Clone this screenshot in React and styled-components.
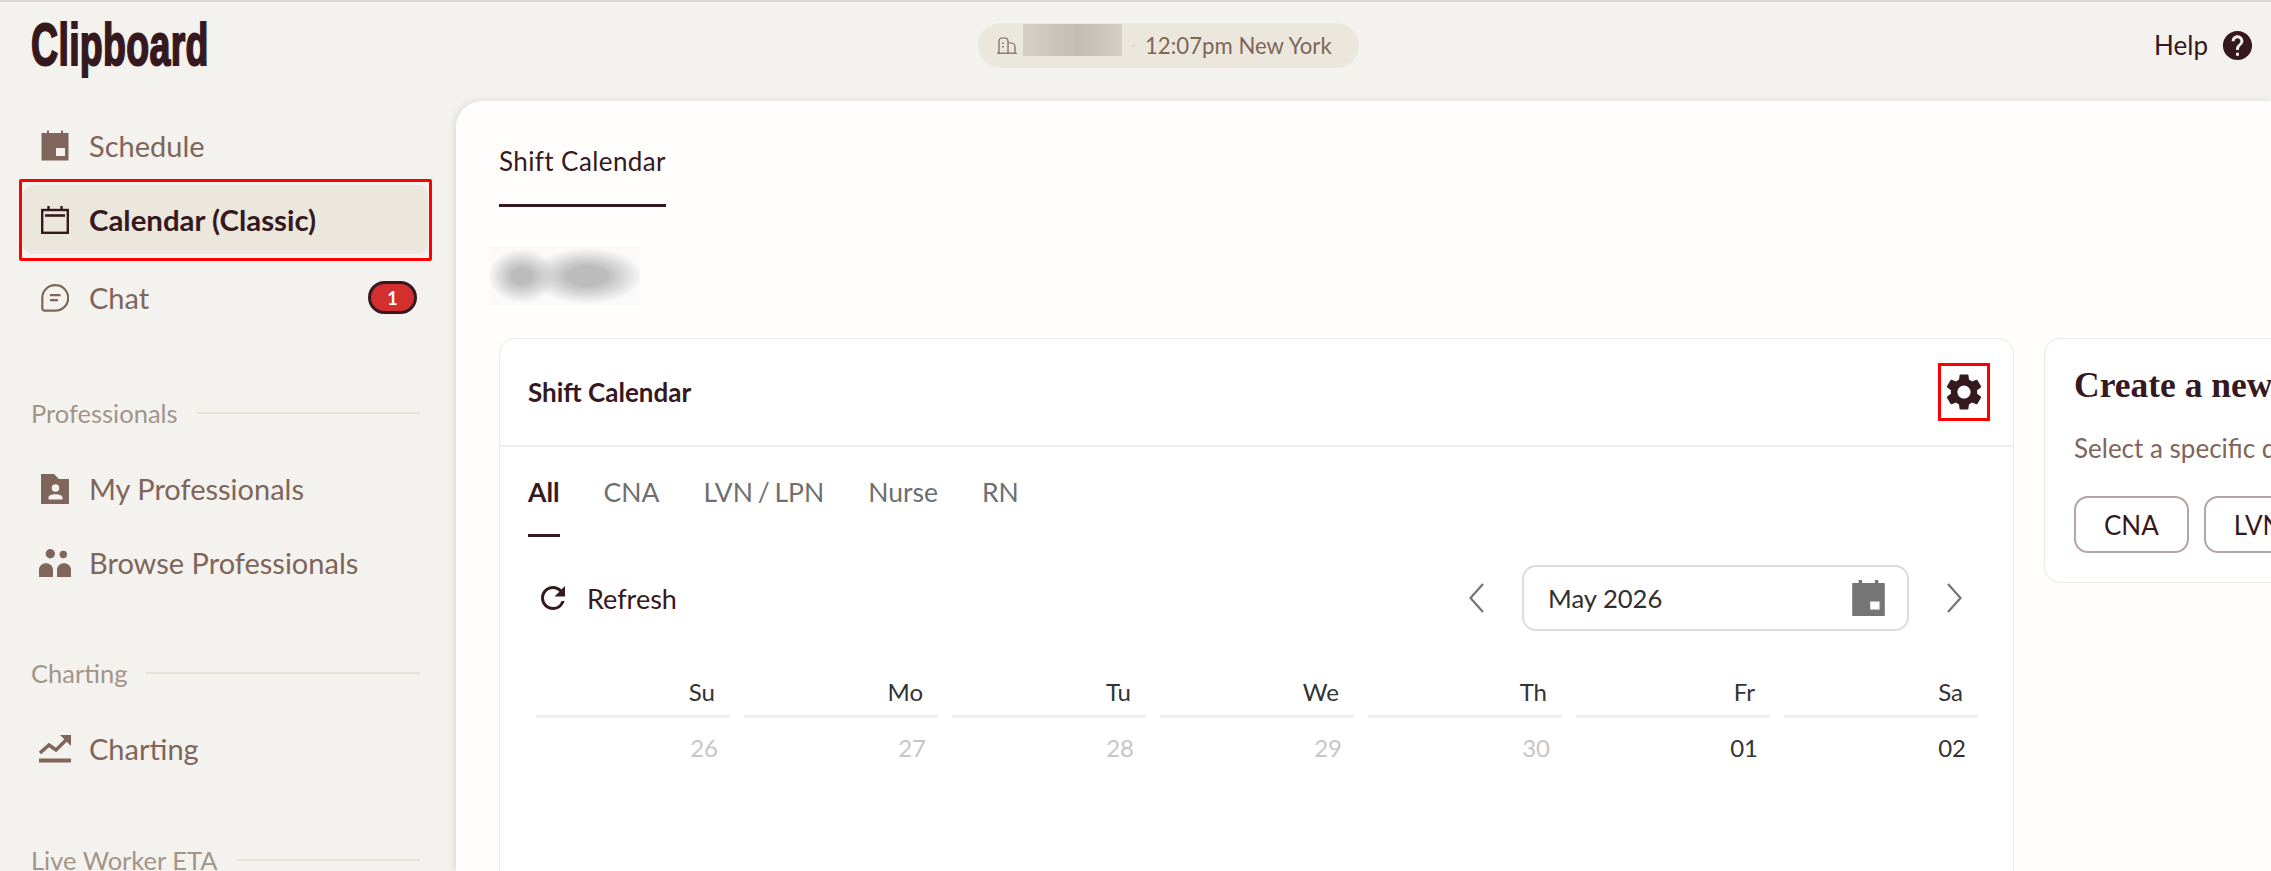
import React from 'react';
import styled, { createGlobalStyle } from 'styled-components';
import { MdSettings, MdRefresh, MdHelp } from 'react-icons/md';

const GlobalStyle = createGlobalStyle`
  html, body {
    margin: 0;
    padding: 0;
    height: 100%;
    overflow: hidden;
    background: #f3f2ee;
  }
  * {
    box-sizing: border-box;
  }
`;

const Page = styled.div`
  width: 2271px;
  height: 871px;
  overflow: hidden;
  background: #f3f2ee;
  font-family: Lato, "Liberation Sans", sans-serif;
  color: #36191e;
`;

const TopBar = styled.header`
  height: 101px;
  border-top: 2px solid #d9d9d6;
  padding: 0 16px 13px 31px;
  display: grid;
  grid-template-columns: 947px auto 1fr;
  align-items: center;
`;

const Logo = styled.div`
  font-family: "Liberation Sans", sans-serif;
  font-weight: 700;
  font-size: 60px;
  line-height: 60px;
  letter-spacing: 0.5px;
  color: #36191e;
  -webkit-text-stroke: 2px #36191e;
  transform: scaleX(0.625);
  transform-origin: left center;
  white-space: nowrap;
`;

const LocationPill = styled.div`
  height: 45px;
  width: 381px;
  border-radius: 23px;
  background: #ebe7dc;
  display: flex;
  align-items: center;
  padding-left: 19px;
  font-size: 22.2px;
  color: #7f655a;
`;

const BlurredName = styled.div`
  width: 99px;
  height: 32px;
  margin: -11px 0 0 6px;
  background: linear-gradient(90deg, #d6d0c6, #c3bcb2 55%, #d4cec4);
`;

const Dot = styled.span`
  width: 3px;
  height: 3px;
  border-radius: 50%;
  background: #dcd8cc;
  margin: 0 10px 0 10px;
`;

const HelpLink = styled.div`
  justify-self: end;
  display: flex;
  align-items: center;
  gap: 12px;
  font-size: 26px;
  color: #36191e;
`;

const Body = styled.div`
  display: flex;
  height: 770px;
`;

const Sidebar = styled.nav`
  width: 456px;
  flex-shrink: 0;
  padding: 10px 28px 0 23px;
`;

const NavRow = styled.div`
  position: relative;
  height: 69px;
  display: flex;
  align-items: center;
  gap: 18px;
  padding: 0 11px 0 16px;
  border-radius: 10px;
  font-size: ${(p) => (p.$active ? '29.4px' : '29px')};
  color: ${(p) => (p.$active ? '#36191e' : '#7f655a')};
  font-weight: ${(p) => (p.$active ? 700 : 400)};
  background: ${(p) => (p.$active ? '#ebe7dc' : 'transparent')};
  margin-top: ${(p) => (p.$active ? '5px' : p.$flush ? '5px' : '0')};
  margin-bottom: ${(p) => (p.$active ? '9px' : '0')};

  ${(p) =>
    p.$active &&
    `&::after {
      content: '';
      position: absolute;
      inset: -6px -4px -7px -4px;
      border: 3px solid #ff0000;
      border-radius: 2px;
    }`}
`;

const NavIcon = styled.span`
  width: 32px;
  height: 32px;
  flex-shrink: 0;
  display: flex;
  align-items: center;
  justify-content: center;
`;

const NavBadge = styled.span`
  margin-left: auto;
  width: 49px;
  height: 33px;
  border-radius: 17px;
  background: #d32f2f;
  border: 3px solid #36191e;
  color: #ffffff;
  font-size: 18px;
  font-weight: 700;
  display: flex;
  align-items: center;
  justify-content: center;
`;

const SectionLabel = styled.div`
  display: flex;
  align-items: center;
  gap: 19px;
  height: 30px;
  margin: ${(p) => p.$top}px 8px 26px;
  font-size: 25.5px;
  color: #a3948a;
  white-space: nowrap;

  &::after {
    content: '';
    flex: 1;
    height: 2px;
    background: #e6e2d8;
  }
`;

const Main = styled.main`
  flex: 1;
  min-width: 0;
  overflow: hidden;
  background: #fffefc;
  border-top-left-radius: 26px;
  box-shadow: -2px 0 6px rgba(80, 60, 40, 0.12);
  padding: 41px 0 0 43px;
`;

const PageTab = styled.div`
  display: inline-block;
  height: 65px;
  line-height: 38px;
  border-bottom: 3px solid #36191e;
  font-size: 26px;
  letter-spacing: 0.4px;
  color: #36191e;
`;

const BlurredTitle = styled.div`
  width: 151px;
  height: 59px;
  margin: 40px 0 32px -10px;
  background:
    radial-gradient(ellipse 34px 27px at 33px 29px, #bcbcbc 30%, rgba(188, 188, 188, 0) 100%),
    radial-gradient(ellipse 56px 28px at 98px 29px, #bcbcbc 35%, rgba(188, 188, 188, 0) 100%),
    #fafafa;
`;

const Columns = styled.div`
  display: flex;
  gap: 30px;
  width: 2200px;
`;

const Card = styled.section`
  width: 1515px;
  height: 600px;
  flex-shrink: 0;
  background: #ffffff;
  border: 1px solid #e8e8e6;
  border-radius: 16px;
`;

const CardHeader = styled.div`
  height: 108px;
  display: flex;
  align-items: center;
  justify-content: space-between;
  padding: 0 23px 0 28px;
  border-bottom: 2px solid #eeeeec;
`;

const CardTitle = styled.h2`
  margin: 0;
  font-size: 26px;
  font-weight: 700;
  color: #36191e;
`;

const GearBox = styled.div`
  width: 52px;
  height: 58px;
  border: 3px solid #ff0000;
  display: flex;
  align-items: center;
  justify-content: center;
  color: #36191e;
`;

const TabRow = styled.div`
  display: flex;
  gap: 44px;
  padding-left: 28px;
`;

const RoleTab = styled.div`
  padding: 30px 0 27px;
  line-height: 30px;
  font-size: 26.5px;
  word-spacing: -2px;
  font-weight: ${(p) => (p.$active ? 700 : 400)};
  color: ${(p) => (p.$active ? '#36191e' : '#6f6f6f')};
  border-bottom: 3px solid ${(p) => (p.$active ? '#36191e' : 'transparent')};
`;

const Toolbar = styled.div`
  display: flex;
  align-items: center;
  justify-content: space-between;
  margin-top: 28px;
  padding: 0 51px 0 35px;
`;

const RefreshButton = styled.div`
  display: flex;
  align-items: center;
  gap: 16px;
  font-size: 27px;
  color: #36191e;
`;

const MonthNav = styled.div`
  display: flex;
  align-items: center;
  gap: 38px;
`;

const MonthField = styled.div`
  width: 387px;
  height: 66px;
  border: 2px solid #dcdcdc;
  border-radius: 14px;
  display: flex;
  align-items: center;
  justify-content: space-between;
  padding: 0 22px 0 24px;
  font-size: 25.6px;
  color: #2f2f2f;
`;

const CalendarGrid = styled.div`
  display: grid;
  grid-template-columns: repeat(7, 194px);
  column-gap: 14px;
  margin: 46px 0 0 36px;
`;

const DayHead = styled.div`
  height: 41px;
  line-height: 30px;
  padding-right: 15px;
  text-align: right;
  font-size: 24px;
  color: #333333;
  border-bottom: 3px solid #f0f0f0;
`;

const DayCell = styled.div`
  margin-top: 15px;
  line-height: 30px;
  padding-right: 12px;
  text-align: right;
  font-size: 24px;
  color: ${(p) => (p.$muted ? '#c6c6c6' : '#333333')};
`;

const SideCard = styled.section`
  width: 600px;
  height: 245px;
  flex-shrink: 0;
  background: #ffffff;
  border: 1px solid #e8e8e6;
  border-radius: 16px;
  padding: 26px 29px;
`;

const SideTitle = styled.h3`
  margin: 0;
  font-family: "Liberation Serif", serif;
  font-size: 35.5px;
  line-height: 40px;
  font-weight: 700;
  color: #36191e;
  white-space: nowrap;
`;

const SideText = styled.p`
  margin: 28px 0 0;
  font-size: 26px;
  line-height: 30px;
  color: #7f655a;
  white-space: nowrap;
`;

const ChipRow = styled.div`
  display: flex;
  gap: 15px;
  margin-top: 33px;
`;

const Chip = styled.div`
  height: 57px;
  padding: 0 28px;
  border: 2px solid #b5a5a5;
  border-radius: 14px;
  display: flex;
  align-items: center;
  font-size: 26px;
  color: #36191e;
`;

const ScheduleIcon = ({ color = '#7f655a', width = 28, height = 31, rounded }) => (
  <svg width={width} height={height} viewBox="0 0 28 31">
    <path
      fill={color}
      fillRule="evenodd"
      stroke={rounded ? color : 'none'}
      strokeWidth={rounded ? 1 : 0}
      strokeLinejoin="round"
      d="M0.5 3H6V0.5H8V3H20V0.5H22V3H27.5V30.5H0.5ZM15 18V26H24V18Z"
    />
  </svg>
);

const CalendarIcon = () => (
  <svg width="28" height="28" viewBox="0 0 28 28" fill="none" stroke="#36191e">
    <rect x="1.2" y="4" width="25.6" height="22.8" strokeWidth="2.4" />
    <path d="M4 9.5H24" strokeWidth="2.6" />
    <path d="M7.5 0V4M20.5 0V4" strokeWidth="2.4" />
  </svg>
);

const ChatIcon = () => (
  <svg width="28" height="28" viewBox="0 0 28 28" fill="none" stroke="#7f655a" strokeWidth="2.2">
    <path d="M14.5 1.2a12.6 12.6 0 1 1 0 25.4H3.5a2.2 2.2 0 0 1-2.2-2.2V14a12.8 12.8 0 0 1 13.2-12.8z" />
    <path d="M9 11.2H19.5M9 16.2H17" />
  </svg>
);

const ContactIcon = () => (
  <svg width="28" height="30" viewBox="0 0 28 30">
    <path fill="#7f655a" d="M0 0H13L18 5H28V30H0Z" />
    <circle cx="14.5" cy="14" r="3.8" fill="#f3f2ee" />
    <path fill="#f3f2ee" d="M7.5 25.5V23.5C7.5 19 21.5 19 21.5 23.5V25.5Z" />
  </svg>
);

const PeopleIcon = () => (
  <svg width="32" height="28" viewBox="0 0 32 28" fill="#7f655a">
    <circle cx="11.3" cy="4.7" r="4.7" />
    <circle cx="24.3" cy="5.5" r="3.7" />
    <path d="M0 28V21C0 12 14 12 14 21V28Z" />
    <path d="M18 28V21C18 12 32 12 32 21V28Z" />
  </svg>
);

const ChartIcon = () => (
  <svg width="32" height="28" viewBox="0 0 32 28" fill="#7f655a">
    <rect x="0" y="23.5" width="32" height="4" />
    <path d="M1 18L10 10L17 15L27 5" fill="none" stroke="#7f655a" strokeWidth="3.4" />
    <path d="M21 0H32V11Z" />
  </svg>
);

const BuildingIcon = () => (
  <svg width="20" height="17" viewBox="0 0 20 17" fill="none" stroke="#7f655a" strokeWidth="1.2">
    <path d="M2 16V4a3 3 0 0 1 3-3h3a3 3 0 0 1 3 3V16" />
    <path d="M11 6h3a4 4 0 0 1 4 4v6" />
    <path d="M0 16.2H20" />
    <path d="M6 5.5V7M6 9V10.5" strokeWidth="1.6" />
  </svg>
);

const Chevron = ({ left }) => (
  <svg width="15" height="30" viewBox="0 0 15 30" fill="none" stroke="#757575" strokeWidth="2.2">
    <path d={left ? 'M14 1L1.5 15L14 29' : 'M1 1L13.5 15L1 29'} />
  </svg>
);

const days = ['Su', 'Mo', 'Tu', 'We', 'Th', 'Fr', 'Sa'];
const dates = [
  { label: '26', muted: true },
  { label: '27', muted: true },
  { label: '28', muted: true },
  { label: '29', muted: true },
  { label: '30', muted: true },
  { label: '01' },
  { label: '02' },
];

export default function App() {
  return (
    <Page>
      <GlobalStyle />
      <TopBar>
        <Logo>Clipboard</Logo>
        <LocationPill>
          <BuildingIcon />
          <BlurredName />
          <Dot />
          12:07pm New York
        </LocationPill>
        <HelpLink>
          Help
          <MdHelp size={35} />
        </HelpLink>
      </TopBar>
      <Body>
        <Sidebar>
          <NavRow>
            <NavIcon><ScheduleIcon /></NavIcon>
            Schedule
          </NavRow>
          <NavRow $active>
            <NavIcon><CalendarIcon /></NavIcon>
            Calendar (Classic)
          </NavRow>
          <NavRow>
            <NavIcon><ChatIcon /></NavIcon>
            Chat
            <NavBadge>1</NavBadge>
          </NavRow>

          <SectionLabel $top={66}>Professionals</SectionLabel>
          <NavRow>
            <NavIcon><ContactIcon /></NavIcon>
            My Professionals
          </NavRow>
          <NavRow $flush>
            <NavIcon><PeopleIcon /></NavIcon>
            Browse Professionals
          </NavRow>

          <SectionLabel $top={61}>Charting</SectionLabel>
          <NavRow>
            <NavIcon><ChartIcon /></NavIcon>
            Charting
          </NavRow>

          <SectionLabel $top={62}>Live Worker ETA</SectionLabel>
        </Sidebar>

        <Main>
          <PageTab>Shift Calendar</PageTab>
          <BlurredTitle />
          <Columns>
            <Card>
              <CardHeader>
                <CardTitle>Shift Calendar</CardTitle>
                <GearBox><MdSettings size={44} /></GearBox>
              </CardHeader>
              <TabRow>
                <RoleTab $active>All</RoleTab>
                <RoleTab>CNA</RoleTab>
                <RoleTab>LVN / LPN</RoleTab>
                <RoleTab>Nurse</RoleTab>
                <RoleTab>RN</RoleTab>
              </TabRow>
              <Toolbar>
                <RefreshButton>
                  <MdRefresh size={36} />
                  Refresh
                </RefreshButton>
                <MonthNav>
                  <Chevron left />
                  <MonthField>
                    May 2026
                    <ScheduleIcon color="#757575" width={33} height={36} rounded />
                  </MonthField>
                  <Chevron />
                </MonthNav>
              </Toolbar>
              <CalendarGrid>
                {days.map((d) => (
                  <DayHead key={d}>{d}</DayHead>
                ))}
                {dates.map((d) => (
                  <DayCell key={d.label} $muted={d.muted}>{d.label}</DayCell>
                ))}
              </CalendarGrid>
            </Card>
            <SideCard>
              <SideTitle>Create a new shift</SideTitle>
              <SideText>Select a specific qualification</SideText>
              <ChipRow>
                <Chip>CNA</Chip>
                <Chip>LVN / LPN</Chip>
              </ChipRow>
            </SideCard>
          </Columns>
        </Main>
      </Body>
    </Page>
  );
}
